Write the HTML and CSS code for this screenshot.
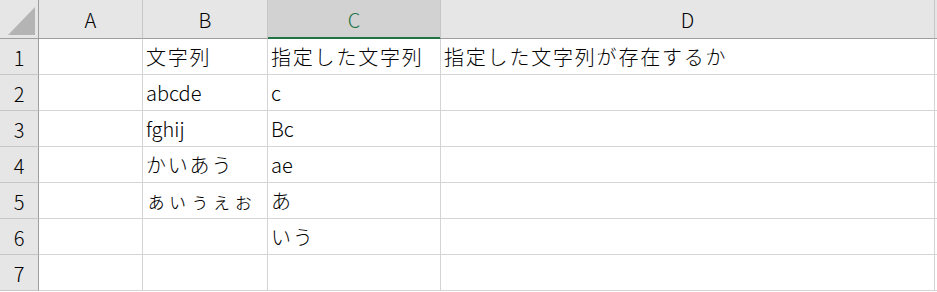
FILE: index.html
```html
<!DOCTYPE html>
<html lang="ja">
<head>
    <meta charset="UTF-8">
    <title>Sheet1</title>
    <link rel="stylesheet" href="styles.css">
</head>
<body>
    <div class="sheet">
        <!-- column headers -->
        <div class="hdr corner"><span class="corner-mark"></span></div>
        <div class="hdr col">A</div>
        <div class="hdr col">B</div>
        <div class="hdr col selected">C</div>
        <div class="hdr col">D</div>
        <div class="hdr rest"></div>

        <!-- row 1 -->
        <div class="rowhdr">1</div>
        <div class="cell"></div>
        <div class="cell jp">文字列</div>
        <div class="cell jp">指定した文字列</div>
        <div class="cell jp">指定した文字列が存在するか</div>
        <div class="edge"></div>

        <!-- row 2 -->
        <div class="rowhdr">2</div>
        <div class="cell"></div>
        <div class="cell">abcde</div>
        <div class="cell">c</div>
        <div class="cell"></div>
        <div class="edge"></div>

        <!-- row 3 -->
        <div class="rowhdr">3</div>
        <div class="cell"></div>
        <div class="cell">fghij</div>
        <div class="cell">Bc</div>
        <div class="cell"></div>
        <div class="edge"></div>

        <!-- row 4 -->
        <div class="rowhdr">4</div>
        <div class="cell"></div>
        <div class="cell jp">かいあう</div>
        <div class="cell">ae</div>
        <div class="cell"></div>
        <div class="edge"></div>

        <!-- row 5 -->
        <div class="rowhdr">5</div>
        <div class="cell"></div>
        <div class="cell jp">ぁぃぅぇぉ</div>
        <div class="cell jp">あ</div>
        <div class="cell"></div>
        <div class="edge"></div>

        <!-- row 6 -->
        <div class="rowhdr">6</div>
        <div class="cell"></div>
        <div class="cell"></div>
        <div class="cell jp">いう</div>
        <div class="cell"></div>
        <div class="edge"></div>

        <!-- row 7 -->
        <div class="rowhdr">7</div>
        <div class="cell"></div>
        <div class="cell"></div>
        <div class="cell"></div>
        <div class="cell"></div>
        <div class="edge"></div>
    </div>
</body>
</html>
```

FILE: styles.css
```css
body {
    margin: 0;
    padding: 0;
    background-color: white;
    font-family: "Noto Sans CJK JP", "Noto Sans", sans-serif;
    font-size: 20px;
    font-weight: 300;
    color: black;
}
.sheet {
    display: grid;
    grid-template-columns: 39px 104px 125px 173px 494px 2px;
    grid-template-rows: 39px repeat(7, 36px);
    width: 937px;
    overflow: hidden;
}
.hdr {
    background-color: #e6e6e6;
    border-bottom: 1px solid #9e9e9e;
    box-sizing: border-box;
    display: flex;
    align-items: center;
    justify-content: center;
    line-height: 1;
    padding-top: 2px;
}
.hdr.col {
    border-right: 1px solid #c6c6c6;
    background-clip: padding-box;
}
.hdr.selected {
    background-color: #d2d2d2;
    color: #217346;
    box-shadow: inset 0 -1px 0 #217346;
    border-bottom-color: #217346;
}
.corner {
    border-right: 1px solid #9e9e9e;
    position: relative;
}
.corner-mark {
    position: absolute;
    left: 8px;
    top: 7px;
    width: 0;
    height: 0;
    border-left: 27px solid transparent;
    border-bottom: 28px solid #b4b4b4;
}
.rowhdr {
    background-color: #e6e6e6;
    border-right: 1px solid #9e9e9e;
    border-bottom: 1px solid #c6c6c6;
    box-sizing: border-box;
    display: flex;
    align-items: center;
    justify-content: center;
    line-height: 1;
    padding-top: 2px;
}
.cell {
    border-right: 1px solid #d4d4d4;
    border-bottom: 1px solid #d4d4d4;
    box-sizing: border-box;
    display: flex;
    align-items: center;
    padding-left: 3px;
    padding-top: 1px;
    white-space: nowrap;
    line-height: 1;
}
.cell.jp {
    letter-spacing: 1.8px;
}
.edge {
    border-bottom: 1px solid #d4d4d4;
}
```
